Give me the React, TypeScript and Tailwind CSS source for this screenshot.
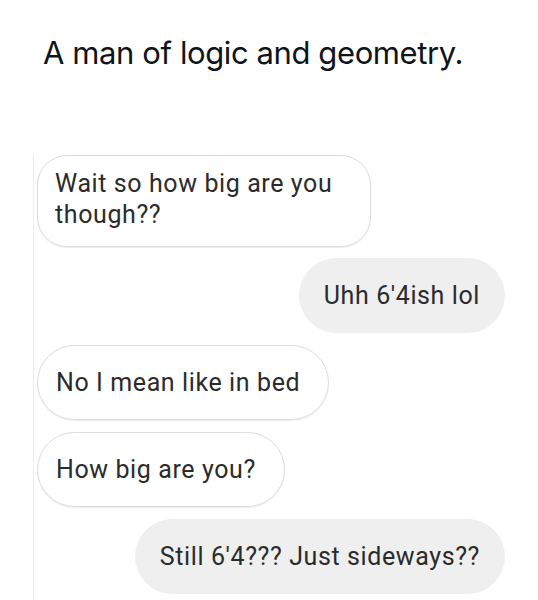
import React from "react";

type Msg = { text: React.ReactNode; mine: boolean; width?: string };

const messages: Msg[] = [
  { text: "Uhh 6'4ish lol", mine: true },
  { text: "No I mean like in bed", mine: false },
  { text: "How big are you?", mine: false },
  { text: "Still 6'4??? Just sideways??", mine: true },
];

export default function App() {
  return (
    <div className="w-[538px] h-[600px] bg-white overflow-hidden">
      {/* Tweet text */}
      <div className="pt-[34px] pl-[43px] font-['Inter',sans-serif] text-[31px] leading-[38px] tracking-[-0.4px] text-[#0f1419]">
        A man of logic and geometry.
      </div>

      {/* Screenshot of chat */}
      <div className="mt-[83px] ml-[33px] border-l border-[#ececec] h-[460px] pl-[3px] pr-[33px] font-['Roboto',sans-serif] text-[25px] tracking-[0.6px] text-[#2b2b2b]">
        <div className="w-[334px] h-[92px] rounded-[30px] border border-[#dcdcdc] shadow-[0_1px_1px_rgba(0,0,0,0.08)] pl-[17px] pt-[12px] leading-[31px]">
          Wait so how big are you
          <br />
          though??
        </div>

        <div className="flex flex-col gap-[12px] mt-[11px]">
          {messages.map((m, i) => (
            <div key={i} className={m.mine ? "flex justify-end" : "flex"}>
              <div
                className={
                  m.mine
                    ? "h-[75px] rounded-full bg-[#efefef] px-[25px] flex items-center"
                    : "h-[75px] rounded-full border border-[#dcdcdc] shadow-[0_1px_1px_rgba(0,0,0,0.08)] pl-[18px] pr-[28px] flex items-center"
                }
              >
                {m.text}
              </div>
            </div>
          ))}
        </div>
      </div>
    </div>
  );
}
